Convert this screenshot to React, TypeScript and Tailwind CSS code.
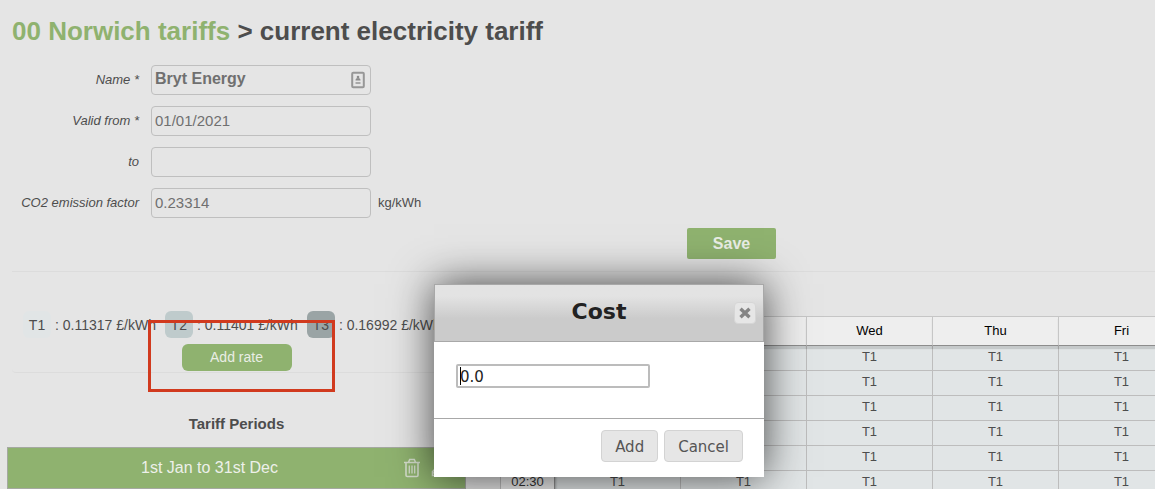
import type { ReactNode } from "react";
import clsx from "clsx";

const DAYS = ["Mon", "Tue", "Wed", "Thu", "Fri", "Sat", "Sun"];
const TIMES = ["00:00", "00:30", "01:00", "01:30", "02:00", "02:30", "03:00"];

const RATES = [
  { name: "T1", cost: "0.11317", badge: "bg-[#e1e5e6]" },
  { name: "T2", cost: "0.11401", badge: "bg-[#bfcbcc]" },
  { name: "T3", cost: "0.16992", badge: "bg-[#9aa4a5]" },
];

type FieldProps = {
  id: string;
  label: string;
  value?: string;
  bold?: boolean;
  unit?: string;
  icon?: ReactNode;
};

function Field({ id, label, value = "", bold, unit, icon }: FieldProps) {
  return (
    <div className="flex items-center">
      <label htmlFor={id} className="mr-3 w-[139px] text-right text-[13px] italic">
        {label}
      </label>
      <div className="relative">
        <input
          id={id}
          type="text"
          defaultValue={value}
          className={clsx(
            "block h-[30px] w-[220px] rounded border border-[#bfbfbf] bg-transparent pb-0.5 pl-[3px] text-[#707070]",
            bold ? "text-base font-bold" : "text-[15px]"
          )}
        />
        {icon}
      </div>
      {unit && <span className="ml-[7px] text-[13px]">{unit}</span>}
    </div>
  );
}

/* Contact-card glyph at the end of the name box */
function CardIcon() {
  return (
    <svg
      aria-hidden
      viewBox="0 0 14 18"
      className="absolute top-1.5 right-1.5 h-[18px] w-3.5"
      fill="none"
    >
      <rect x="1.2" y="1.8" width="11.6" height="14.4" rx="1" stroke="#979797" strokeWidth="2" />
      <circle cx="7" cy="6" r="1.3" fill="#8c8c8c" />
      <path d="M4.5 9.5c0-1.800 1-2.500 2.500-2.500s2.500.7 2.500 2.500z" fill="#8c8c8c" />
      <path d="M4.500 12h5" stroke="#a8a8a8" strokeWidth="2" />
    </svg>
  );
}

function TrashIcon() {
  return (
    <svg aria-hidden viewBox="0 0 18 20" className="h-5 w-[18px]" fill="none" stroke="#d3dccb" strokeWidth="1.6">
      <path d="M1 4.500h16M5.500 4.200l1.200-2.700h4.600l1.200 2.700M3 4.800v12.400q0 1.300 1.300 1.300h9.400q1.300 0 1.300-1.300V4.800" />
      <path d="M6.300 7.500v8M9 7.500v8M11.700 7.500v8" strokeWidth="1.300" />
    </svg>
  );
}

function PencilIcon() {
  return (
    <svg aria-hidden viewBox="0 0 18 18" className="h-[18px] w-[18px]" fill="none" stroke="#d3dccb" strokeWidth="1.5">
      <path d="M1.5 16.5v-4l10.5-10.5 4 4-10.500 10.500zM1.500 12.500l4 4" />
    </svg>
  );
}

function TariffForm() {
  return (
    <form>
      <div className="flex flex-col gap-[11px]">
        <Field id="name" label="Name *" value="Bryt Energy" bold icon={<CardIcon />} />
        <Field id="from" label="Valid from *" value="01/01/2021" />
        <Field id="to" label="to" />
        <Field id="co2" label="CO2 emission factor" value="0.23314" unit="kg/kWh" />
      </div>
      <button
        type="button"
        className="mt-2.5 ml-[687px] block h-[31px] w-[89px] rounded-xs bg-[#8fb26f] text-base font-bold text-[#e9ede5]"
      >
        Save
      </button>
    </form>
  );
}

function TariffPeriods() {
  return (
    <section className="w-[459px] shrink-0">
      <div className="mx-[5px] rounded-b border-b border-[#dcdcdc] pt-[39px]">
        <div className="flex items-center pl-[11px] text-sm whitespace-nowrap">
          {RATES.map((r) => (
            <div key={r.name} className="mr-[9px] flex items-center gap-1">
              <span className={clsx("flex h-[27px] w-7 items-center justify-center rounded-md", r.badge)}>
                {r.name}
              </span>
              <span>: {r.cost} £/kWh</span>
            </div>
          ))}
        </div>
        <button
          type="button"
          className="mx-auto mt-1.5 mb-px block h-[27px] w-[110px] rounded-md bg-[#8fb26f] pb-0.5 text-sm text-[#e9ede5]"
        >
          Add rate
        </button>
      </div>

      <h2 className="mt-10 mb-3 text-center text-[15px] leading-[22px] font-bold">Tariff Periods</h2>
      <div className="flex h-[42px] items-center border border-[#a5a9a1] bg-[#8fb26f] text-[#edf0ea]">
        <span className="flex-1 pl-2 text-center text-base">1st Jan to 31st Dec</span>
        <div className="flex items-center gap-2.5 pr-4">
          <button type="button" aria-label="Delete period">
            <TrashIcon />
          </button>
          <button type="button" aria-label="Edit period">
            <PencilIcon />
          </button>
        </div>
      </div>
    </section>
  );
}

function WeekTable() {
  return (
    <table className="mt-11 w-[936px] shrink-0 table-fixed border-separate border-spacing-0 text-center text-[13px]">
      <thead>
        <tr className="h-[30px] text-black">
          <th className="w-[54px] border-y border-l border-[#c6c6c6] border-b-[#8c8c8c] bg-[#eeeeee]" />
          {DAYS.map((d) => (
            <th
              key={d}
              className="relative z-10 border-y border-l border-[#c6c6c6] border-b-[#8c8c8c] bg-[#eeeeee] p-0 pb-px font-normal shadow-[0_3px_1px_rgba(0,0,0,0.12)]"
            >
              {d}
            </th>
          ))}
        </tr>
      </thead>
      <tbody>
        {TIMES.map((t) => (
          <tr key={t} className="h-[25px]">
            <th className="relative border-b border-l border-[#bdbdbd] bg-[#eeeeee] p-0 pb-0.5 font-normal text-[#333] shadow-[2px_0_2px_rgba(0,0,0,0.25)]">
              {t}
            </th>
            {DAYS.map((d) => (
              <td key={d} className="border-b border-l border-[#bdbdbd] bg-[#e1e5e6] p-0 pb-0.5">
                T1
              </td>
            ))}
          </tr>
        ))}
      </tbody>
    </table>
  );
}

function CostDialog() {
  return (
    <div
      role="dialog"
      aria-labelledby="cost-title"
      className="absolute top-[284px] left-[434px] z-20 w-[330px] bg-white font-['DejaVu_Sans',sans-serif] shadow-[0_0_40px_rgba(0,0,0,0.7)]"
    >
      <header className="relative flex h-[58px] items-center justify-center border border-[#a8a8a8] bg-linear-to-b from-[#e3e3e3] from-20% to-[#cbcbcb] to-60%">
        <h2 id="cost-title" className="pb-1 text-[22px] font-bold text-[#222]">
          Cost
        </h2>
        <button
          type="button"
          aria-label="Close"
          className="absolute top-[17px] right-[7px] flex h-[22px] w-[22px] items-center justify-center rounded border border-[#d6d6d6] bg-[#e6e6e6]"
        >
          <svg aria-hidden viewBox="0 0 12 12" className="h-3 w-3" stroke="#858585" strokeWidth="3.4">
            <path d="M1.500 1.700l9 8.600M10.500 1.700l-9 8.600" />
          </svg>
        </button>
      </header>
      <div className="px-[22px] pt-[22px] pb-[30px]">
        <div className="relative w-[194px]">
          <input
            type="text"
            aria-label="Cost"
            defaultValue="0.0"
            className="block h-6 w-full rounded-xs border-2 border-[#bcbcbc] pt-0.5 pl-0.5 text-[15px] text-[#222]"
          />
          <span aria-hidden className="absolute top-[3px] left-1 h-[18px] w-px bg-black" />
        </div>
      </div>
      <footer className="flex justify-end gap-1.5 border-t border-[#a8a8a8] pt-[11px] pr-[21px] pb-[15px] text-[15px] text-[#555]">
        <button type="button" className="h-8 rounded border border-[#d3d3d3] bg-[#e6e6e6] px-[13px] pt-0.5">
          Add
        </button>
        <button type="button" className="h-8 rounded border border-[#d3d3d3] bg-[#e6e6e6] px-[13px] pt-0.5">
          Cancel
        </button>
      </footer>
    </div>
  );
}

export default function App() {
  return (
    <div className="relative h-screen overflow-hidden bg-[#e5e5e5] font-['Liberation_Sans',Arial,sans-serif] text-[#4d4d4d]">
      <h1 className="pt-3.5 pb-4 pl-3 text-[26px] leading-[35px] font-bold whitespace-nowrap">
        <a href="#tariffs" className="text-[#8fb26f]">
          00 Norwich tariffs
        </a>{" "}
        &gt; current electricity tariff
      </h1>
      <TariffForm />
      <hr className="mt-3 ml-3 border-[#dcdcdc]" />
      <div className="flex items-start gap-[34px] pl-[7px]">
        <TariffPeriods />
        <WeekTable />
      </div>

      {/* highlight round the add button */}
      <div aria-hidden className="absolute top-[320px] left-[148px] h-[72px] w-[187px] border-3 border-[#d13a1e]" />
      <CostDialog />
    </div>
  );
}
